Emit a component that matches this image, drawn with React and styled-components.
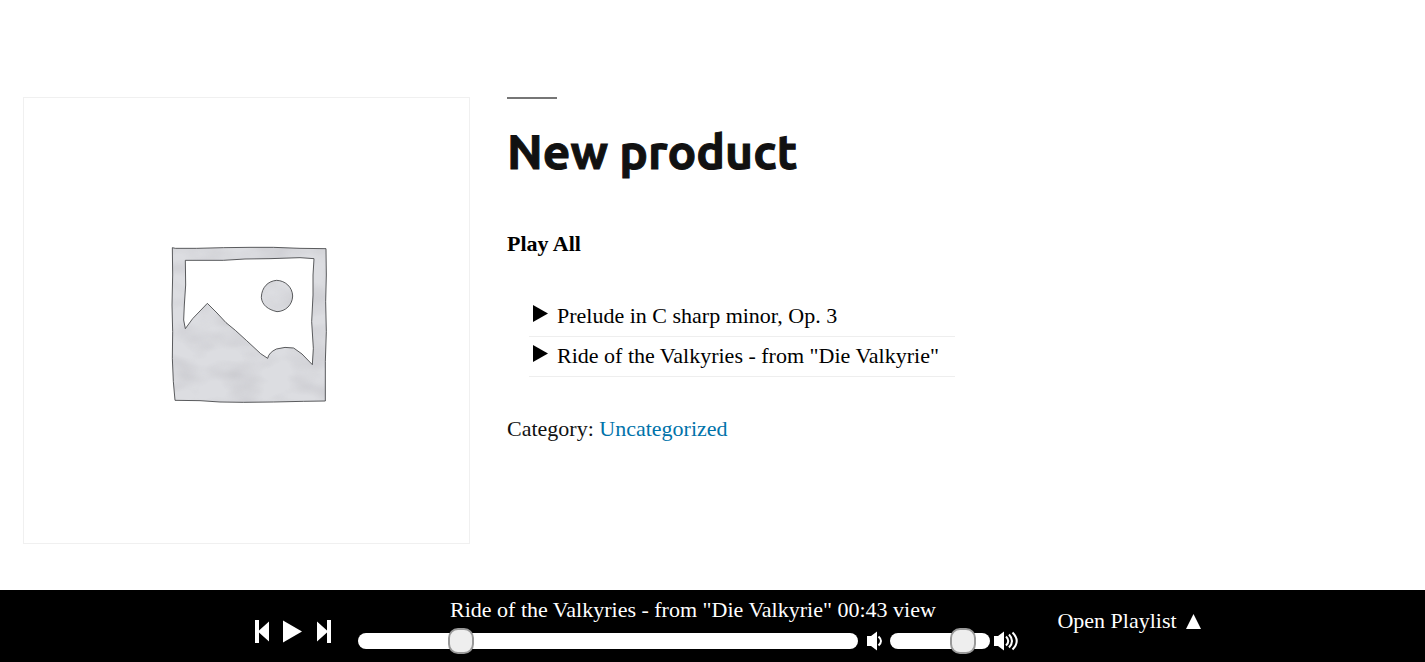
import React, { useState } from "react";
import styled, { createGlobalStyle } from "styled-components";

const GlobalStyle = createGlobalStyle`
  *, *::before, *::after { box-sizing: border-box; }
  body {
    margin: 0;
    background: #fff;
    color: #111;
    font-family: "Liberation Serif", "Times New Roman", serif;
    font-size: 22px;
    line-height: 26px;
  }
`;

const Product = styled.main`
  display: grid;
  grid-template-columns: minmax(0, 447px) minmax(0, 448px);
  align-items: start;
  column-gap: 37px;
  padding: 97px 23px 118px;
`;

const Gallery = styled.figure`
  margin: 0;
  border: 1px solid #f0f0f0;

  svg { display: block; width: 100%; }
`;

const Summary = styled.section`
  display: flex;
  flex-direction: column;
  align-items: flex-start;
`;

const Title = styled.h1`
  margin: 0 0 52px;
  color: #111;
  font: 700 48px/56px Ubuntu, "Noto Sans", sans-serif;
  -webkit-text-stroke: 1px #111;

  &::before {
    content: "";
    display: block;
    width: 50px;
    height: 2px;
    margin-bottom: 24px;
    background: #767676;
  }
`;

const PlainButton = styled.button`
  display: flex;
  align-items: center;
  gap: ${(p) => p.$gap || 0}px;
  margin: 0;
  padding: 0;
  border: 0;
  background: none;
  color: inherit;
  font: inherit;
  font-weight: ${(p) => (p.$bold ? 700 : 400)};
  white-space: nowrap;
  cursor: pointer;
`;

const PlayAll = styled(PlainButton)`
  color: #000;
`;

const TrackList = styled.ul`
  align-self: stretch;
  margin: 40px 0 39px;
  padding: 0 0 0 22px;
  list-style: none;
  color: #000;
`;

const Track = styled.li`
  display: flex;
  align-items: center;
  height: 40px;
  padding: 0 0 2px 4px;
  border-bottom: 1px solid #eee;

  svg { margin-bottom: 4px; }
`;

const Category = styled.p`
  margin: 0;

  a { color: #0073aa; text-decoration: none; }
`;

const Player = styled.footer`
  position: fixed;
  right: 0;
  bottom: 0;
  left: 0;
  display: flex;
  justify-content: center;
  height: 72px;
  padding: 7px 0 8px 31px;
  background: #000;
  color: #fff;
`;

const Transport = styled.div`
  display: flex;
  align-items: center;
  gap: 14px;
  margin: 12px 27px 0 0;
`;

const Deck = styled.div`
  display: flex;
  flex-direction: column;
  gap: 5px;
  margin-right: 38px;
`;

const NowPlaying = styled.div`
  padding-left: 8px;
  text-align: center;
`;

const Sliders = styled.div`
  display: flex;
  align-items: center;
`;

const Slider = styled.input`
  appearance: none;
  width: ${(p) => p.$width}px;
  height: 26px;
  margin: 0;
  background: transparent;

  &::-webkit-slider-runnable-track {
    height: 16px;
    border-radius: 8px;
    background: #fff;
  }

  &::-webkit-slider-thumb {
    appearance: none;
    width: 26px;
    height: 26px;
    margin-top: -5px;
    border: 2px solid #999;
    border-radius: 10px;
    background: #eee;
  }
`;

const VolumeIcon = styled.svg`
  flex: none;
  margin: 0 ${(p) => p.$right || 0}px 0 ${(p) => p.$left}px;
`;

const PlaylistToggle = styled(PlainButton)`
  align-self: flex-start;
  margin-top: 11px;
`;

const tracks = ["Prelude in C sharp minor, Op. 3", 'Ride of the Valkyries - from "Die Valkyrie"'];

const frame =
  "M37 38L46 40L110 40L190 38L270 37L340 37L420 40L498 41L499 120L497 200L499 290L496 380L496 498L430 499L340 501L250 502L180 501L120 497L45 496L40 440L37 370L38 290L36 210L38 120ZM76 76L77 150L73 210L71 255L76 281L98 251L142 205L171 234L198 263L226 286L260 317L302 356L323 370Q326 353 349 342Q375 334 401 339L426 357L457 389L460 340L455 260L459 180L459 120L462 71L420 68L330 71L255 72L190 76Z";
const sun =
  "M350 136C376 137 397 156 398 183C397 210 377 229 351 230C325 224 306 211 304 187C305 157 324 138 350 136Z";

function Placeholder() {
  return (
    <svg viewBox="-408 -411 1335 1335" role="img" aria-label="Awaiting product image">
      <defs>
        <filter id="wash" x="0" y="0" width="1" height="1" colorInterpolationFilters="sRGB">
          <feTurbulence type="fractalNoise" baseFrequency="0.010 0.018" numOctaves="2" seed="4" />
          <feColorMatrix values="0 0 0 0 0.78  0 0 0 0 0.78  0 0 0 0 0.8  1.4 0 0 0 -0.5" result="noise" />
          <feComposite in="noise" in2="SourceGraphic" operator="in" result="tint" />
          <feMerge>
            <feMergeNode in="SourceGraphic" />
            <feMergeNode in="tint" />
          </feMerge>
        </filter>
      </defs>
      <g fill="#dcdde1" fillRule="evenodd" filter="url(#wash)">
        <path d={frame} />
        <path d={sun} />
      </g>
      <g fill="none" stroke="#3c3d40" strokeWidth="2.5" strokeLinejoin="round">
        <path d={frame} />
        <path d={sun} />
      </g>
    </svg>
  );
}

function Glyph({ width, height, d }) {
  return (
    <svg width={width} height={height} viewBox={`0 0 ${width} ${height}`} fill="currentColor" aria-hidden="true">
      <path d={d} />
    </svg>
  );
}

function TransportButton({ label, ...glyph }) {
  return (
    <PlainButton type="button" aria-label={label}>
      <Glyph {...glyph} />
    </PlainButton>
  );
}

export default function App() {
  const [position, setPosition] = useState(19);
  const [volume, setVolume] = useState(80);

  return (
    <>
      <GlobalStyle />
      <Product>
        <Gallery>
          <Placeholder />
        </Gallery>
        <Summary>
          <Title>New product</Title>
          <PlayAll type="button" $bold>Play All</PlayAll>
          <TrackList>
            {tracks.map((name) => (
              <Track key={name}>
                <PlainButton type="button" $gap={9}>
                  <Glyph width={15} height={17} d="M0 0L15 8.5L0 17Z" />
                  {name}
                </PlainButton>
              </Track>
            ))}
          </TrackList>
          <Category>
            Category: <a href="#uncategorized">Uncategorized</a>
          </Category>
        </Summary>
      </Product>
      <Player>
        <Transport>
          <TransportButton label="Previous" width={14} height={23} d="M0 0H4V10.500L14 1.5V21.5L4 12.500V23H0Z" />
          <TransportButton label="Play" width={20} height={23} d="M0 0.500L19 11.500L0 22.500Z" />
          <TransportButton label="Next" width={14} height={23} d="M14 0H10V10.500L0 1.5V21.5L10 12.500V23H14Z" />
        </Transport>
        <Deck>
          <NowPlaying>Ride of the Valkyries - from "Die Valkyrie" 00:43 view</NowPlaying>
          <Sliders>
            <Slider
              type="range"
              aria-label="Seek"
              $width={500}
              value={position}
              onChange={(e) => setPosition(Number(e.target.value))}
            />
            <VolumeIcon $left={9} $right={8} width="15" height="20" viewBox="0 0 15 20" aria-hidden="true">
              <path d="M0 5H4L10 0.500V19.500L4 15H0Z" fill="#fff" />
              <path d="M11.500 5.500Q16.500 10 11.500 14.500" fill="none" stroke="#fff" strokeWidth="2" />
            </VolumeIcon>
            <Slider
              type="range"
              aria-label="Volume"
              $width={100}
              value={volume}
              onChange={(e) => setVolume(Number(e.target.value))}
            />
            <VolumeIcon $left={4} width="25" height="20" viewBox="0 0 25 20" aria-hidden="true">
              <path d="M0 5H4L10 0.500V19.500L4 15H0Z" fill="#fff" />
              <path
                d="M12 5.500Q16.500 10 12 14.500M15 3.500Q21 10 15 16.500M18.500 1.500Q27 10 18.500 18.500"
                fill="none"
                stroke="#fff"
                strokeWidth="2"
              />
            </VolumeIcon>
          </Sliders>
        </Deck>
        <PlaylistToggle type="button" $gap={9}>
          Open Playlist
          <Glyph width={15} height={15} d="M0 15L7.5 0L15 15Z" />
        </PlaylistToggle>
      </Player>
    </>
  );
}
